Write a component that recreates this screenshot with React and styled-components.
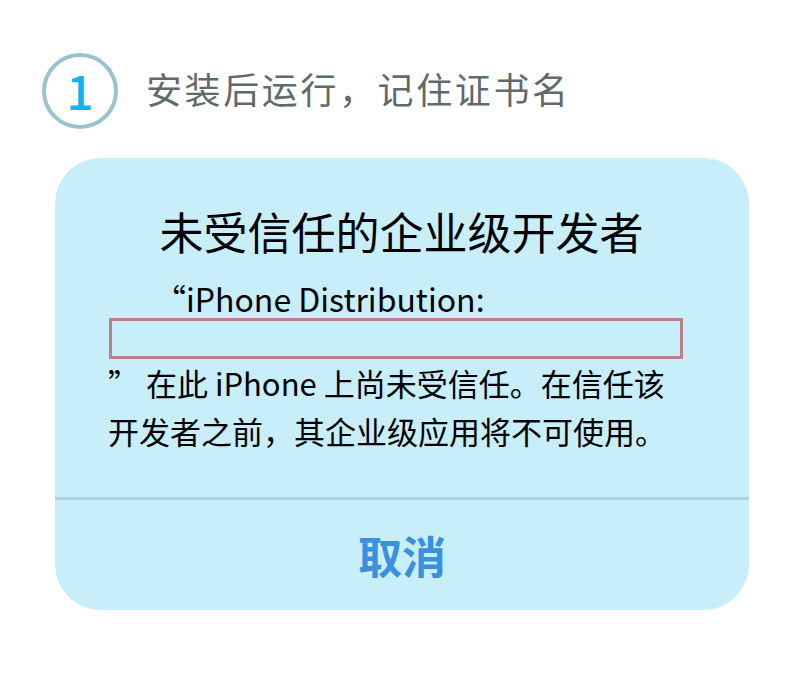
import React from 'react'
import styled, { createGlobalStyle } from 'styled-components'

const Global = createGlobalStyle`
  body {
    margin: 0;
    background: #fff;
    font-family: "Noto Sans CJK SC", "Noto Sans", sans-serif;
  }
`

const Page = styled.div`
  width: 800px;
  height: 700px;
  box-sizing: border-box;
  padding-top: 53px;
`

const Step = styled.div`
  display: flex;
  align-items: center;
  gap: 28px;
  padding-left: 42px;
`

const Circle = styled.div`
  width: 76px;
  height: 76px;
  box-sizing: border-box;
  border: 4px solid #9ac3cf;
  border-radius: 50%;
  display: flex;
  align-items: center;
  justify-content: center;
  padding-bottom: 5px;
  color: #12b3ec;
  font-size: 48px;
  font-weight: 500;
  line-height: 1;
`

const StepText = styled.div`
  font-size: 36px;
  line-height: 44px;
  color: #5f6a6c;
  letter-spacing: 2.6px;
  margin-top: -6px;
`

const Card = styled.div`
  margin: 29px 51px 0 55px;
  height: 452px;
  background: #c8eef9;
  border-radius: 46px;
  display: flex;
  flex-direction: column;
  overflow: hidden;
`

const Body = styled.div`
  padding: 44px 66px 0 53px;
  height: 342px;
  box-sizing: border-box;
  border-bottom: 3px solid #a9d4df;
`

const Title = styled.h2`
  margin: 0;
  text-align: center;
  font-size: 44px;
  line-height: 58px;
  font-weight: 400;
  color: #000;
  padding-left: 12px;
`

const Line = styled.div`
  font-size: 32px;
  line-height: 40px;
  color: #000;
  margin-top: ${p => p.$top || 0}px;
  padding-left: ${p => p.$indent || 0}px;
`

const Blank = styled.div`
  height: 41px;
  box-sizing: border-box;
  border: 3px solid #b98088;
  margin-left: 1px;
`

const Para = styled.p`
  margin: 0;
  font-size: 31px;
  line-height: 48px;
  color: #000;
  white-space: nowrap;
`

const Cancel = styled.button`
  flex: 1;
  border: none;
  background: transparent;
  font-family: inherit;
  font-size: 44px;
  font-weight: 700;
  color: #3a8fdf;
  padding: 0;
`

export default function App() {
  return (
    <Page>
      <Global />
      <Step>
        <Circle>1</Circle>
        <StepText>安装后运行，记住证书名</StepText>
      </Step>
      <Card>
        <Body>
          <Title>未受信任的企业级开发者</Title>
          <Line $top={18} $indent={46}>“iPhone Distribution:</Line>
          <Blank />
          <Para>
            ” 在此 iPhone 上尚未受信任。在信任该
            <br />
            开发者之前，其企业级应用将不可使用。
          </Para>
        </Body>
        <Cancel>取消</Cancel>
      </Card>
    </Page>
  )
}
